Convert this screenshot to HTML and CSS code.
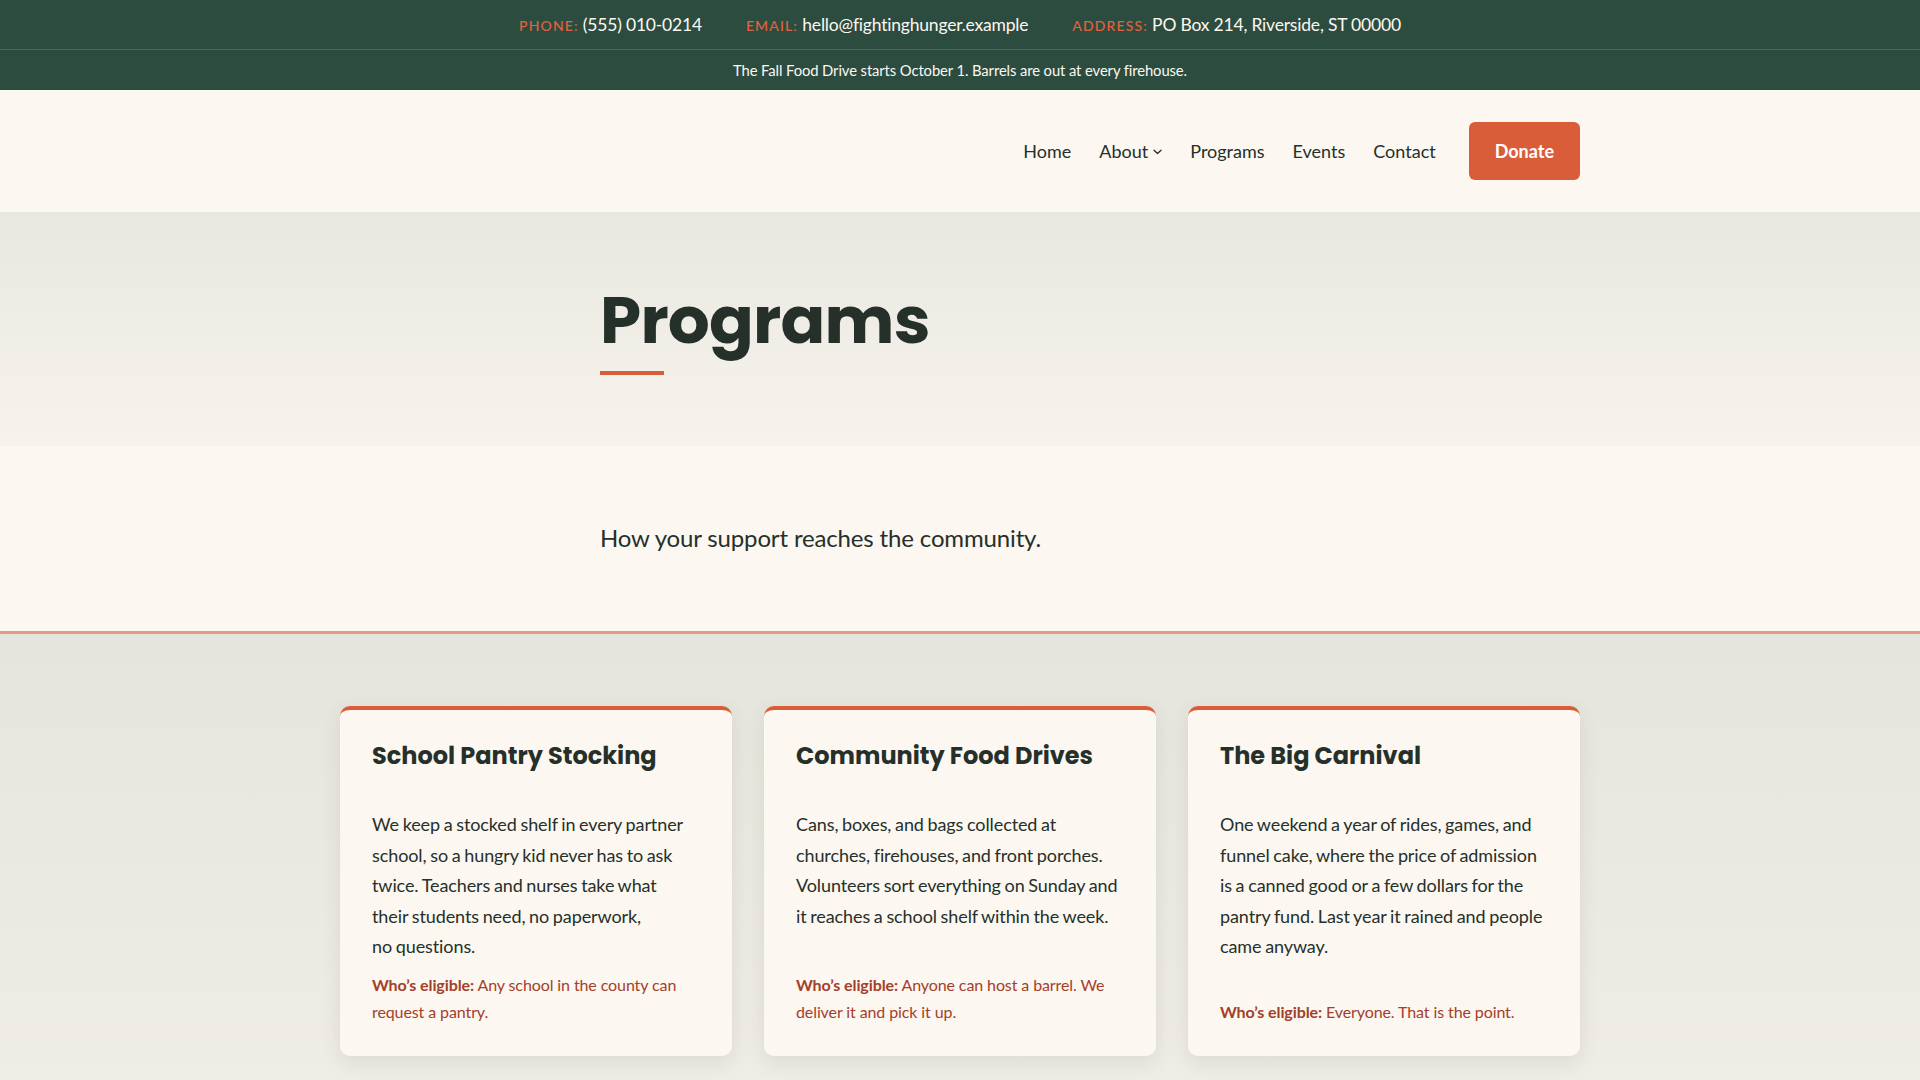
FILE: index.html
```html
<!DOCTYPE html>
<html lang="en">
<head>
    <meta charset="UTF-8">
    <meta name="viewport" content="width=device-width, initial-scale=1.0">
    <title>Programs | Fighting Hunger</title>
    <link rel="stylesheet" href="styles.css">
</head>
<body>
    <div class="topbar">
        <div class="contact-strip">
            <span class="contact-item"><span class="contact-label">Phone:</span> (555) 010-0214</span>
            <span class="contact-item"><span class="contact-label">Email:</span> hello@fightinghunger.example</span>
            <span class="contact-item"><span class="contact-label">Address:</span> PO Box 214, Riverside, ST 00000</span>
        </div>
        <div class="announcement">The Fall Food Drive starts October 1. Barrels are out at every firehouse.</div>
    </div>

    <header class="site-header">
        <nav class="main-nav">
            <a href="#" class="nav-link">Home</a>
            <a href="#" class="nav-link">About
                <svg class="chevron" width="9" height="6" viewBox="0 0 9 6" aria-hidden="true">
                    <path d="M1 1.2l3.5 3.3 3.5-3.3" fill="none" stroke="currentColor" stroke-width="1.3" stroke-linecap="round" stroke-linejoin="round"/>
                </svg>
            </a>
            <a href="#" class="nav-link">Programs</a>
            <a href="#" class="nav-link">Events</a>
            <a href="#" class="nav-link">Contact</a>
            <a href="#" class="btn-donate">Donate</a>
        </nav>
    </header>

    <section class="page-hero">
        <div class="narrow">
            <h1>Programs</h1>
        </div>
    </section>

    <section class="intro">
        <div class="narrow">
            <p class="lead">How your support reaches the community.</p>
        </div>
    </section>

    <section class="programs">
        <div class="card-grid">
            <article class="program-card">
                <h2>School Pantry Stocking</h2>
                <p>We keep a stocked shelf in every partner school, so a hungry kid never has to ask twice. Teachers and nurses take what their students need, no paperwork, no&nbsp;questions.</p>
                <p class="eligible"><strong>Who’s eligible:</strong> Any school in the county can request a pantry.</p>
            </article>
            <article class="program-card">
                <h2>Community Food Drives</h2>
                <p>Cans, boxes, and bags collected at churches, firehouses, and front porches. Volunteers sort everything on Sunday and it reaches a school shelf within the week.</p>
                <p class="eligible"><strong>Who’s eligible:</strong> Anyone can host a barrel. We deliver it and pick it up.</p>
            </article>
            <article class="program-card">
                <h2>The Big Carnival</h2>
                <p>One weekend a year of rides, games, and funnel cake, where the price of admission is a canned good or a few dollars for the pantry fund. Last year it rained and people came anyway.</p>
                <p class="eligible"><strong>Who’s eligible:</strong> Everyone. That is the point.</p>
            </article>
        </div>
    </section>
</body>
</html>
```

FILE: styles.css
```css
* {
    margin: 0;
    padding: 0;
    box-sizing: border-box;
}

body {
    font-family: 'Lato', 'Liberation Sans', sans-serif;
    background: #fcf7f0;
    color: #25302b;
}

a {
    text-decoration: none;
    color: inherit;
}

/* top contact bar */
.topbar {
    background: #2c4c40;
    color: #fcf7f0;
}

.contact-strip {
    display: flex;
    justify-content: center;
    gap: 44px;
    height: 50px;
    align-items: center;
    font-size: 17.5px;
    letter-spacing: -0.2px;
    border-bottom: 1px solid #6e5a48;
}

.contact-label {
    color: #e0633d;
    text-transform: uppercase;
    font-size: 14px;
    font-weight: 500;
    letter-spacing: 0.08em;
}

.announcement {
    height: 40px;
    display: flex;
    align-items: center;
    justify-content: center;
    font-size: 14.8px;
    letter-spacing: -0.1px;
}

/* header / nav */
.site-header {
    height: 122px;
    display: flex;
    align-items: center;
    max-width: 1240px;
    margin: 0 auto;
}

.main-nav {
    margin-left: auto;
    display: flex;
    align-items: center;
    gap: 28px;
    font-size: 18px;
}

.nav-link {
    display: flex;
    align-items: center;
    gap: 5px;
    color: #25302b;
}

.chevron {
    margin-top: 2px;
}

.btn-donate {
    margin-left: 5px;
    background: #d95d39;
    color: #fff;
    font-weight: 700;
    padding: 18px 26px;
    line-height: 22px;
    border-radius: 6px;
}

/* page title */
.page-hero {
    background: linear-gradient(180deg, #e8e8e0, #f6f3ec);
    height: 234px;
    padding-top: 69px;
}

.narrow {
    max-width: 720px;
    margin: 0 auto;
}

h1 {
    font-family: 'Poppins', 'Inter', sans-serif;
    font-weight: 700;
    font-size: 66px;
    line-height: 1.2;
    color: #25302b;
    letter-spacing: -0.8px;
}

h1::after {
    content: '';
    display: block;
    width: 64px;
    height: 4px;
    background: #d95d39;
    margin-top: 11px;
}

.intro {
    height: 188px;
    padding-top: 75px;
    border-bottom: 3px solid #e49a85;
}

.lead {
    font-size: 24px;
    line-height: 1.4;
    letter-spacing: -0.15px;
}

/* program cards */
.programs {
    background: linear-gradient(180deg, #e5e5dd, #efede6);
    padding: 72px 0 60px;
}

.card-grid {
    max-width: 1240px;
    margin: 0 auto;
    display: grid;
    grid-template-columns: repeat(3, 1fr);
    gap: 32px;
}

.program-card {
    background: #fcf7f0;
    border-top: 4px solid #d95d39;
    border-radius: 10px;
    padding: 28px 36px 31px 32px;
    box-shadow: 0 6px 20px rgba(60, 60, 40, 0.10);
    display: flex;
    flex-direction: column;
}

.program-card h2 {
    font-family: 'Poppins', 'Inter', sans-serif;
    font-weight: 700;
    font-size: 24px;
    line-height: 36px;
    margin-bottom: 35px;
    color: #25302b;
}

.program-card p {
    font-size: 18px;
    line-height: 1.7;
    letter-spacing: -0.1px;
    word-spacing: -0.8px;
    margin-bottom: 9px;
}

.program-card .eligible {
    margin-top: auto;
    margin-bottom: 0;
    font-size: 16px;
    letter-spacing: -0.1px;
    word-spacing: 0;
    color: #a3402a;
}

.eligible strong {
    font-weight: 700;
}
```
